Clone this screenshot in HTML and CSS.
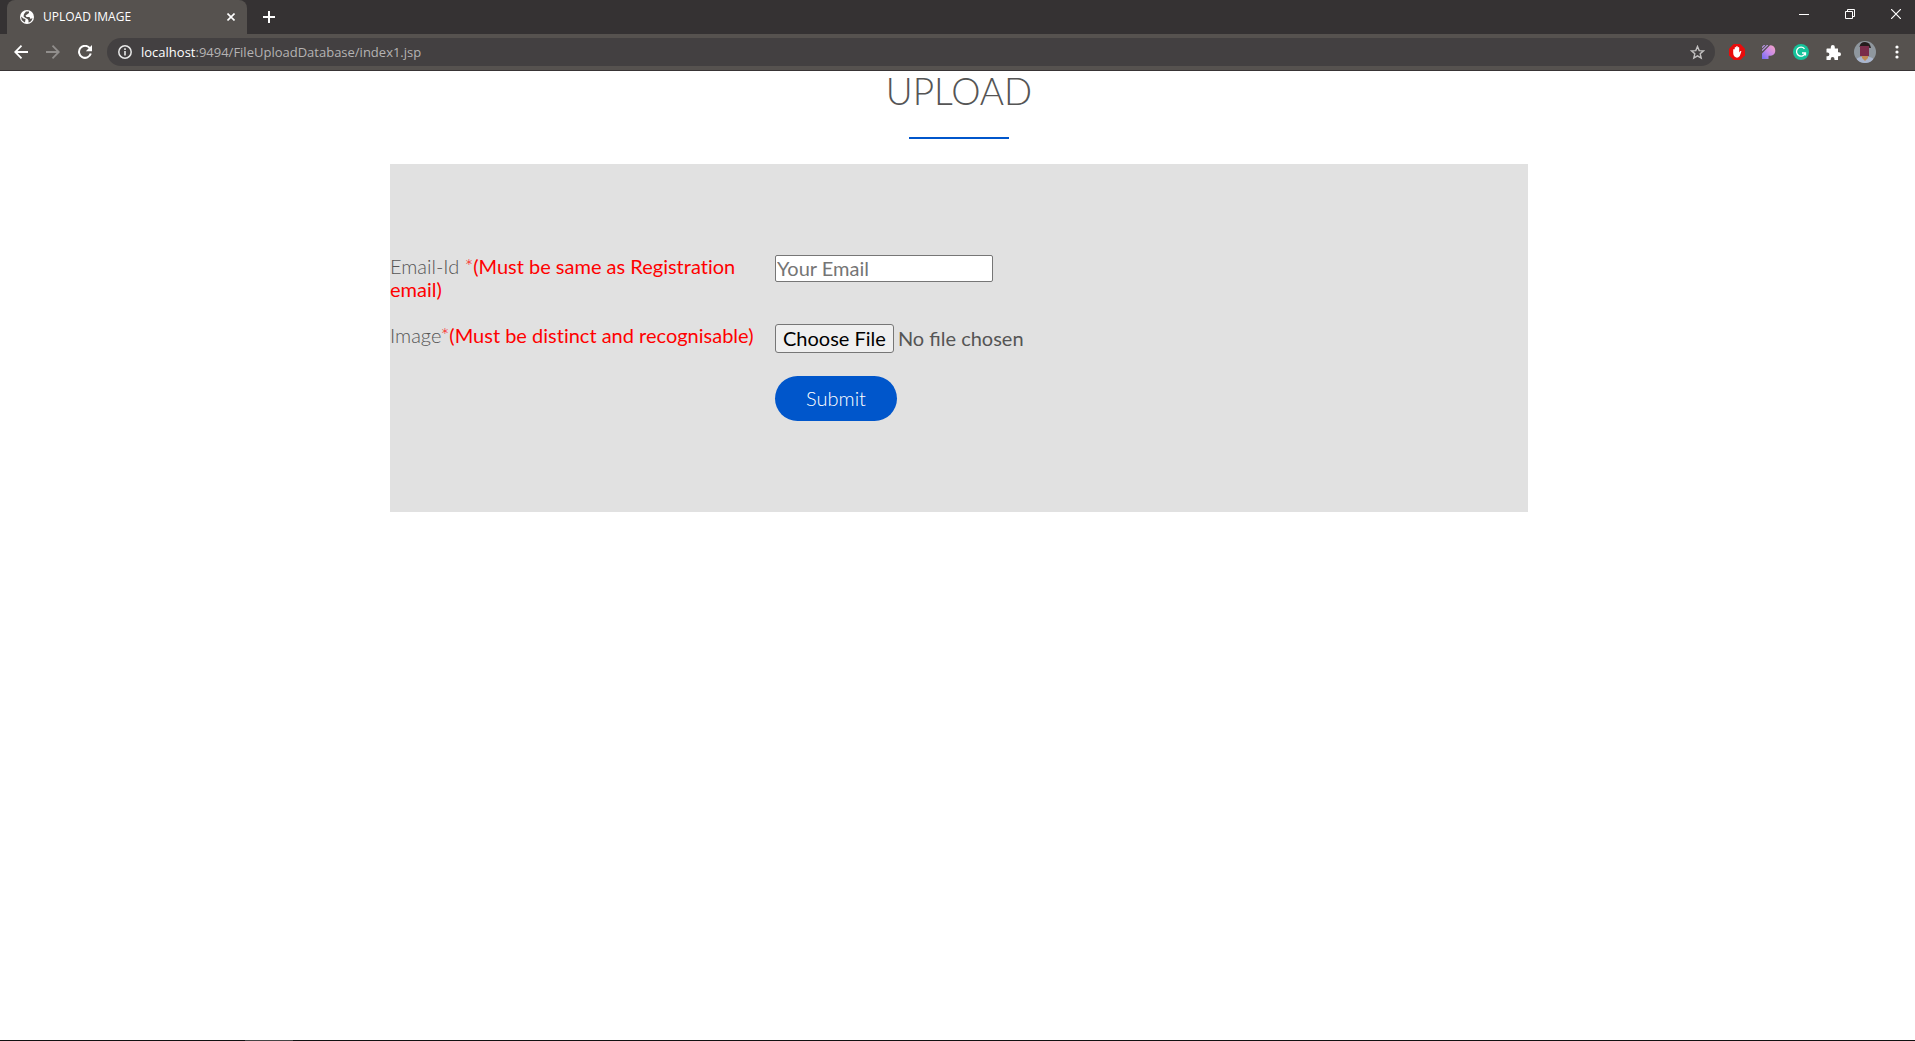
FILE: index.html
```html
<!DOCTYPE html>
<html lang="en">
<head>
<meta charset="utf-8">
<title>UPLOAD IMAGE</title>
<link rel="stylesheet" href="styles.css">
</head>
<body>
<header class="browser">
  <div class="tabstrip">
    <div class="tab">
      <svg class="tab-icon" viewBox="0 0 14 14"><circle cx="7" cy="7" r="7" fill="#fff"/><path d="M1 6.5 3.5 8.5 5.5 9 5 12.5 3.5 11.500Q1 10 1 6.500ZM6 1.500 9 1.500 9 3 7 4.500 5.500 5.500 6.500 7 9.500 7 10.500 9 12.500 8Q12 11.500 8.500 12.600L8.500 10.500 7.500 9 5.500 8 3.500 6.500 4 4Z" fill="#56524f"/></svg>
      <span class="tab-title">UPLOAD IMAGE</span>
      <button class="plain tab-close" aria-label="Close tab"><svg width="8" height="8" viewBox="0 0 8 8"><path d="M.5.500l7 7M7.500.500l-7 7" stroke="#fff" stroke-width="1.600"/></svg></button>
    </div>
    <button class="plain new-tab" aria-label="New tab"><svg width="12" height="12" viewBox="0 0 12 12"><path d="M6 0v12M0 6h12" stroke="#fff" stroke-width="2"/></svg></button>
    <div class="window-controls">
      <button class="plain" aria-label="Minimize"><svg width="10" height="10" viewBox="0 0 10 10"><path d="M0 5.500h10" stroke="#fff"/></svg></button>
      <button class="plain" aria-label="Restore"><svg width="10" height="10" viewBox="0 0 10 10" fill="none" stroke="#fff"><path d="M.5 2.500h7v7h-7zM2.500 2.500v-2h7v7h-2"/></svg></button>
      <button class="plain" aria-label="Close"><svg width="10" height="10" viewBox="0 0 10 10"><path d="M0 0l10 10M10 0L0 10" stroke="#fff" stroke-width="1.200"/></svg></button>
    </div>
  </div>
  <div class="toolbar">
    <button class="plain tool" aria-label="Back"><svg width="14" height="14" viewBox="0 0 14 14" fill="none" stroke="#fff" stroke-width="1.800"><path d="M14 7H1.500M7.500.700 1.200 7l6.300 6.300"/></svg></button>
    <button class="plain tool" aria-label="Forward"><svg width="14" height="14" viewBox="0 0 14 14" fill="none" stroke="#918e8c" stroke-width="1.800"><path d="M0 7h12.500M6.500.700 12.800 7l-6.300 6.300"/></svg></button>
    <button class="plain tool" aria-label="Reload"><svg width="14" height="14" viewBox="0 0 14 14"><path d="M11.800 3.200A6 6 0 1 0 12.800 8.500" fill="none" stroke="#fff" stroke-width="2"/><path d="M14 0v6.200H7.800z" fill="#fff"/></svg></button>
    <div class="omnibox">
      <svg width="14" height="14" viewBox="0 0 14 14"><circle cx="7" cy="7" r="6.200" fill="none" stroke="#e8e8e8" stroke-width="1.500"/><path d="M7 6v4.500M7 3.300v1.600" stroke="#e8e8e8" stroke-width="1.600"/></svg>
      <div class="url"><span class="host">localhost</span>:9494/FileUploadDatabase/index1.jsp</div>
      <button class="plain star" aria-label="Bookmark"><svg width="15" height="15" viewBox="0 0 15 15"><path d="M7.500 1.500 9.200 5.600l4.300.300-3.300 2.900 1 4.300-3.700-2.300-3.700 2.300 1-4.300L1.500 5.900l4.300-.300z" fill="none" stroke="#c4c2c2" stroke-width="1.400"/></svg></button>
    </div>
    <div class="extensions">
      <button class="plain tool" aria-label="Ad blocker"><svg width="16" height="16" viewBox="0 0 16 16"><path d="M4.700 0h6.600L16 4.700v6.600L11.300 16H4.700L0 11.300V4.700z" fill="#e80c0c"/><path d="M4.200 9V5.500q.9-1 1.500 0V3.500q.8-1 1.500 0V2.500q.8-1 1.500 0v1q.8-1 1.500 0V8.500q1.300-2 2.200-1.200L10.800 12q-2.500 3-5.300.5Q4.200 11 4.200 9z" fill="#fff"/></svg></button>
      <button class="plain tool" aria-label="Design extension"><svg width="14" height="14" viewBox="0 0 14 14"><defs><linearGradient id="g" x1="1" y1="0" x2="0" y2="1"><stop offset="0" stop-color="#f7a5c4"/><stop offset=".5" stop-color="#c88ae8"/><stop offset="1" stop-color="#6f6cf5"/></linearGradient></defs><path d="M8 .3a5.300 5.300 0 0 1 1 10.500H6.500V14H0V8.500z" fill="url(#g)"/><path d="M0 2.700 2.700 0M0 5.700 5.700 0" stroke="#b795e3" stroke-width="1.200"/></svg></button>
      <button class="plain tool" aria-label="Grammar checker"><svg width="16" height="16" viewBox="0 0 16 16"><circle cx="8" cy="8" r="8" fill="#15c39a"/><path d="M11.500 4.800A4.500 4.500 0 1 0 12.300 9H9M12.500 8.500v3" fill="none" stroke="#fff" stroke-width="1.300"/></svg></button>
      <button class="plain tool" aria-label="Extensions"><svg width="15" height="15" viewBox="0 0 15 15"><path d="M1 3.500h3.800V2a2 2 0 0 1 4 0v1.500h3.200v3.800H13a2 2 0 0 1 0 4h-1V15H8.500v-1a1.900 1.900 0 0 0-3.800 0v1H.5v-3.800h1a1.900 1.900 0 0 0 0-3.800h-1V4z" fill="#fff"/></svg></button>
      <button class="plain tool" aria-label="Profile"><svg width="22" height="22" viewBox="0 0 22 22"><defs><clipPath id="c"><circle cx="11" cy="11" r="11"/></clipPath></defs><g clip-path="url(#c)"><path d="M0 0h22v22H0z" fill="#8f979e"/><path d="M1 22q1-6 6-6h8q5 0 6 6z" fill="#aab6ce"/><path d="M8 14h6v3l-3 3-3-3z" fill="#c08a52"/><path d="M5.500 6Q6 1 11 1t6 6z" fill="#251d1d"/><path d="M6 5h9v10H6z" fill="#7a2c4a"/></g></svg></button>
      <button class="plain tool" aria-label="Menu"><svg width="4" height="14" viewBox="0 0 4 14" fill="#fff"><circle cx="2" cy="2" r="1.600"/><circle cx="2" cy="7" r="1.600"/><circle cx="2" cy="12" r="1.600"/></svg></button>
    </div>
  </div>
</header>
<main class="page">
  <h1 class="heading">UPLOAD</h1>
  <hr class="rule">
  <form class="panel">
    <label for="email">Email-Id <span class="required">*<span class="note">(Must be same as Registration email)</span></span></label>
    <input class="email" id="email" type="email" placeholder="Your Email">
    <label for="image">Image<span class="required">*<span class="note">(Must be distinct and recognisable)</span></span></label>
    <input class="file" id="image" type="file">
    <button class="submit" type="button">Submit</button>
  </form>
</main>
<footer class="taskbar"><span class="taskbar-item"></span></footer>
</body>
</html>
```
FILE: styles.css
```css
* { box-sizing: border-box; }

body {
  display: flex;
  flex-direction: column;
  min-height: 100vh;
  margin: 0;
  background: #fff;
  font-family: Lato, sans-serif;
  font-size: 20px;
  line-height: 23px;
  color: #555;
}

svg { display: block; flex: none; }

.plain {
  display: flex;
  align-items: center;
  justify-content: center;
  padding: 0;
  border: 0;
  background: none;
}

/* Browser frame */
.browser {
  background: #56524f;
  border-bottom: 1px solid #383435;
  font-family: "Open Sans", sans-serif;
  line-height: 18px;
}

.tabstrip {
  display: flex;
  height: 34px;
  padding-left: 7px;
  background: #353233;
}

.tab {
  display: flex;
  align-items: center;
  gap: 9px;
  width: 240px;
  padding: 0 12px 0 13px;
  border-radius: 8px 8px 0 0;
  background: #56524f;
  color: #fff;
  font-size: 12px;
}

.tab-icon { width: 14px; height: 14px; }
.tab-close { margin-left: auto; }
.new-tab { width: 44px; }
.window-controls { display: flex; margin-left: auto; }
.window-controls .plain { width: 46px; height: 28px; }
.window-controls .plain:last-child { width: 42px; padding-left: 4px; }

.toolbar {
  display: flex;
  align-items: center;
  height: 36px;
  padding: 0 2px 0 5px;
}

.tool { width: 32px; height: 32px; }

.omnibox {
  display: flex;
  flex: 1;
  align-items: center;
  gap: 9px;
  height: 28px;
  margin: 0 6px;
  padding: 0 10px 0 11px;
  border-radius: 14px;
  background: #434041;
  color: #b5b3b3;
  font-size: 13px;
}

.url { flex: 1; }
.host { color: #fff; }
.extensions { display: flex; }

/* Upload page */
.page {
  flex: 1;
  padding-left: 3px;
}

.heading {
  margin: 0;
  font-size: 37px;
  font-weight: 300;
  line-height: 40px;
  text-align: center;
}

.rule {
  width: 100px;
  height: 2px;
  margin: 26px auto 25px;
  border: 0;
  background: #0056cb;
}

.panel {
  display: grid;
  grid-template-columns: 365px 1fr;
  column-gap: 20px;
  row-gap: 23px;
  justify-items: start;
  align-items: start;
  max-width: 1138px;
  margin: 0 auto;
  padding: 91px 0;
  background: #e1e1e1;
  font-weight: 300;
  font-variant-ligatures: none;
}

.required { color: #f00; }
.note { font-weight: 400; }

.email {
  width: 218px;
  height: 27px;
  padding: 0 1px 2px;
  border: 1px solid #767676;
  border-radius: 2px;
  font: 400 20px Lato, sans-serif;
}

.email::placeholder { color: #757575; }

.file {
  width: 320px;
  font: 400 20px Lato, sans-serif;
  color: #555;
}

.file::file-selector-button {
  height: 29px;
  margin-right: 4px;
  padding: 0 7px 2px;
  border: 1px solid #767676;
  border-radius: 3px;
  background: #efefef;
  color: #000;
  font: inherit;
}

.submit {
  grid-column: 2;
  width: 122px;
  height: 45px;
  padding: 0 0 2px;
  border: 0;
  border-radius: 23px;
  background: #0056cb;
  color: #fff;
  font: 300 20px Lato, sans-serif;
}

.taskbar {
  height: 1px;
  padding-left: 245px;
  background: #111;
}

.taskbar-item {
  display: block;
  width: 48px;
  height: 1px;
  background: #444;
}
```
